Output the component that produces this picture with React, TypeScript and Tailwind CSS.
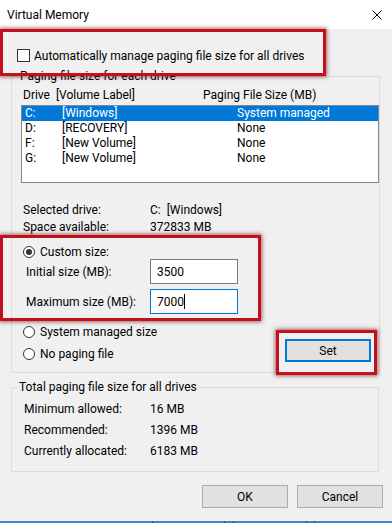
import React from "react";

const drives = [
  { letter: "C:", label: "[Windows]", size: "System managed", selected: true },
  { letter: "D:", label: "[RECOVERY]", size: "None", selected: false },
  { letter: "F:", label: "[New Volume]", size: "None", selected: false },
  { letter: "G:", label: "[New Volume]", size: "None", selected: false },
];

const totals = [
  { label: "Minimum allowed:", value: "16 MB" },
  { label: "Recommended:", value: "1396 MB" },
  { label: "Currently allocated:", value: "6183 MB" },
];

const Radio = ({ checked }: { checked?: boolean }) => (
  <span className="w-[12px] h-[12px] rounded-full border border-[#333] bg-white flex items-center justify-center shrink-0">
    {checked && <span className="w-[6px] h-[6px] rounded-full bg-[#333]" />}
  </span>
);

const Highlight = ({ className }: { className: string }) => (
  <div
    className={
      "absolute border-[3px] border-[#c1121c] shadow-[0_0_4px_1px_rgba(110,0,10,0.6)] pointer-events-none " +
      className
    }
  />
);

export default function App() {
  return (
    <div className="relative w-[392px] h-[523px] bg-[#f0f0f0] overflow-hidden flex flex-col text-[12px] leading-[16px] text-black font-['Segoe_UI',Roboto,sans-serif]">
      {/* Title bar */}
      <div className="h-[29px] bg-white flex items-center justify-between pl-[7px] pr-[10px] shrink-0">
        <span>Virtual Memory</span>
        <svg width="10" height="10" viewBox="0 0 10 10" className="mt-[1px]">
          <path d="M0.5 0.5 L9.5 9.5 M9.5 0.5 L0.5 9.5" stroke="#000" strokeWidth="1" />
        </svg>
      </div>

      <div className="flex-1 flex flex-col">
        {/* Auto manage checkbox */}
        <div className="mt-[20px] h-[13px] flex items-center pl-[17px] gap-[4px]">
          <span className="w-[13px] h-[13px] border border-[#333] bg-white shrink-0" />
          <span>Automatically manage paging file size for all drives</span>
        </div>

        {/* Per drive group */}
        <fieldset className="mt-[6px] ml-[11px] w-[369px] h-[305px] border border-[#dcdcdc]">
          <legend className="ml-[6px] px-[2px]">Paging file size for each drive</legend>

          <div className="mt-[3px] h-[16px] pl-[11px] flex">
            <span className="w-[180px]">Drive&nbsp;&nbsp;[Volume Label]</span>
            <span>Paging File Size (MB)</span>
          </div>

          <div className="mt-[2px] ml-[9px] w-[358px] h-[78px] border border-[#828790] bg-white leading-[15px]">
            {drives.map((d) => (
              <div
                key={d.letter}
                className={
                  "h-[15px] flex pl-[3px] " +
                  (d.selected ? "bg-[#0078d7] text-white" : "")
                }
              >
                <span className="w-[37px]">{d.letter}</span>
                <span className="w-[175px]">{d.label}</span>
                <span>{d.size}</span>
              </div>
            ))}
          </div>

          <div className="mt-[19px] h-[16px] pl-[11px] flex">
            <span className="w-[127px]">Selected drive:</span>
            <span>C:&nbsp;&nbsp;[Windows]</span>
          </div>
          <div className="mt-[1px] h-[16px] pl-[11px] flex">
            <span className="w-[127px]">Space available:</span>
            <span>372833 MB</span>
          </div>

          <div className="mt-[9px] h-[15px] pl-[11px] flex items-center gap-[5px]">
            <Radio checked />
            <span>Custom size:</span>
          </div>
          <div className="h-[25px] pl-[14px] flex items-center">
            <span className="w-[124px]">Initial size (MB):</span>
            <div className="w-[88px] h-[25px] border border-[#7a7a7a] bg-white pl-[6px] flex items-center">
              3500
            </div>
          </div>
          <div className="mt-[5px] h-[25px] pl-[14px] flex items-center">
            <span className="w-[124px]">Maximum size (MB):</span>
            <div className="w-[88px] h-[25px] border border-[#0078d7] bg-white pl-[6px] flex items-center">
              7000
              <span className="w-[1px] h-[15px] bg-black" />
            </div>
          </div>

          <div className="mt-[10px] flex">
            <div className="flex flex-col pl-[11px] gap-[6px]">
              <div className="h-[16px] flex items-center gap-[5px]">
                <Radio />
                <span>System managed size</span>
              </div>
              <div className="h-[16px] flex items-center gap-[5px]">
                <Radio />
                <span>No paging file</span>
              </div>
            </div>
            <button className="ml-auto mr-[8px] mt-[15px] w-[86px] h-[23px] border-2 border-[#0078d7] bg-[#e1e1e1] flex items-center justify-center">
              Set
            </button>
          </div>
        </fieldset>

        {/* Totals group */}
        <fieldset className="mt-[6px] ml-[11px] w-[368px] h-[93px] border border-[#dcdcdc]">
          <legend className="ml-[5px] px-[2px]">Total paging file size for all drives</legend>
          <div className="mt-[6px] flex flex-col gap-[5px]">
            {totals.map((t) => (
              <div key={t.label} className="h-[16px] pl-[12px] flex">
                <span className="w-[126px]">{t.label}</span>
                <span>{t.value}</span>
              </div>
            ))}
          </div>
        </fieldset>

        {/* Dialog buttons */}
        <div className="mt-[13px] flex justify-end gap-[9px] pr-[9px]">
          <button className="w-[86px] h-[23px] border border-[#adadad] bg-[#e1e1e1] flex items-center justify-center">
            OK
          </button>
          <button className="w-[86px] h-[23px] border border-[#adadad] bg-[#e1e1e1] flex items-center justify-center">
            Cancel
          </button>
        </div>

        {/* Window edge below the dialog */}
        <div className="mt-auto h-[2px] bg-[#3a86cf] flex">
          <span className="ml-[152px] w-[1px] bg-[#1f4f80]" />
          <span className="ml-[71px] w-[1px] bg-[#1f4f80]" />
          <span className="ml-[8px] w-[1px] bg-[#1f4f80]" />
          <span className="ml-[72px] w-[1px] bg-[#1f4f80]" />
          <span className="ml-[7px] w-[1px] bg-[#1f4f80]" />
        </div>
      </div>

      <Highlight className="top-[29px] left-0 w-[326px] h-[47px]" />
      <Highlight className="top-[235px] left-0 w-[261px] h-[86px]" />
      <Highlight className="top-[330px] left-[276px] w-[101px] h-[45px]" />
    </div>
  );
}
